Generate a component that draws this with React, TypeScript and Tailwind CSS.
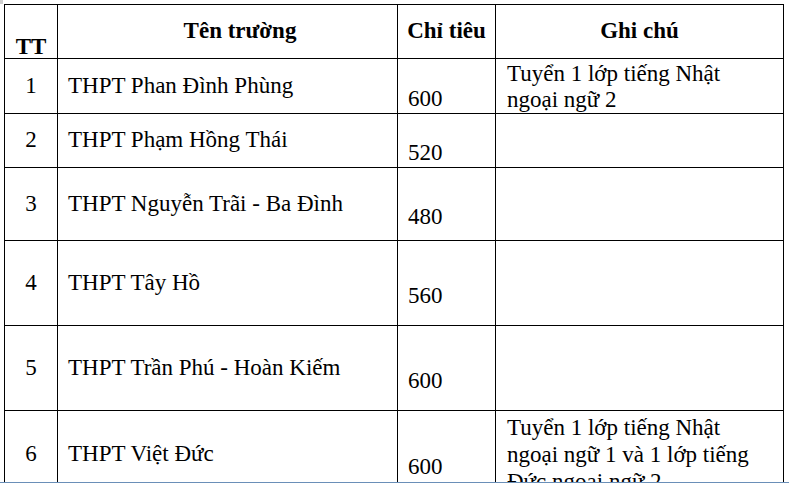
import React from "react";

type Row = { tt: string; name: string; quota: string; notes: string[]; noteCls: string };

const rows: Row[] = [
  {
    tt: "1",
    name: "THPT Phan Đình Phùng",
    quota: "600",
    notes: ["Tuyển 1 lớp tiếng Nhật", "ngoại ngữ 2"],
    noteCls: "pt-[2px] leading-[26px]",
  },
  { tt: "2", name: "THPT Phạm Hồng Thái", quota: "520", notes: [], noteCls: "" },
  { tt: "3", name: "THPT Nguyễn Trãi - Ba Đình", quota: "480", notes: [], noteCls: "" },
  { tt: "4", name: "THPT Tây Hồ", quota: "560", notes: [], noteCls: "" },
  { tt: "5", name: "THPT Trần Phú - Hoàn Kiếm", quota: "600", notes: [], noteCls: "" },
  {
    tt: "6",
    name: "THPT Việt Đức",
    quota: "600",
    notes: ["Tuyển 1 lớp tiếng Nhật", "ngoại ngữ 1 và 1 lớp tiếng", "Đức ngoại ngữ 2"],
    noteCls: "pt-[3px] leading-[27px]",
  },
];

export default function App() {
  return (
    <div className="relative w-[789px] h-[483px] bg-white text-black flex flex-col overflow-hidden font-[family-name:'Liberation_Serif','Times_New_Roman',serif]">
      <div className="absolute left-0 top-0 w-[3px] h-[4px] bg-[#cfcfcf]" />
      <div className="h-[482px] overflow-hidden pt-[4px] pl-[4px]">
        <div className="inline-grid bg-black gap-px p-px grid-cols-[52px_339px_97px_287px] grid-rows-[53px_54px_53px_72px_84px_84px_86px] text-[23px]">
          <div className="bg-white flex items-end justify-center font-bold leading-[22px]">TT</div>
          <div className="bg-white flex items-center justify-center font-bold pl-[25px]">Tên trường</div>
          <div className="bg-white flex items-center justify-center font-bold">Chỉ tiêu</div>
          <div className="bg-white flex items-center justify-center font-bold">Ghi chú</div>
          {rows.map((r) => (
            <React.Fragment key={r.tt}>
              <div className="bg-white flex items-center justify-center">{r.tt}</div>
              <div className="bg-white flex items-center pl-[10px] whitespace-nowrap">{r.name}</div>
              <div className="bg-white flex items-center pl-[10px] pt-[26px]">{r.quota}</div>
              <div className={"bg-white flex flex-col items-start pl-[11px] " + r.noteCls}>
                {r.notes.map((n, i) => (
                  <div key={i} className="whitespace-nowrap">
                    {n}
                  </div>
                ))}
              </div>
            </React.Fragment>
          ))}
        </div>
      </div>
      <div className="h-px bg-[#6a8fb8]" />
    </div>
  );
}
